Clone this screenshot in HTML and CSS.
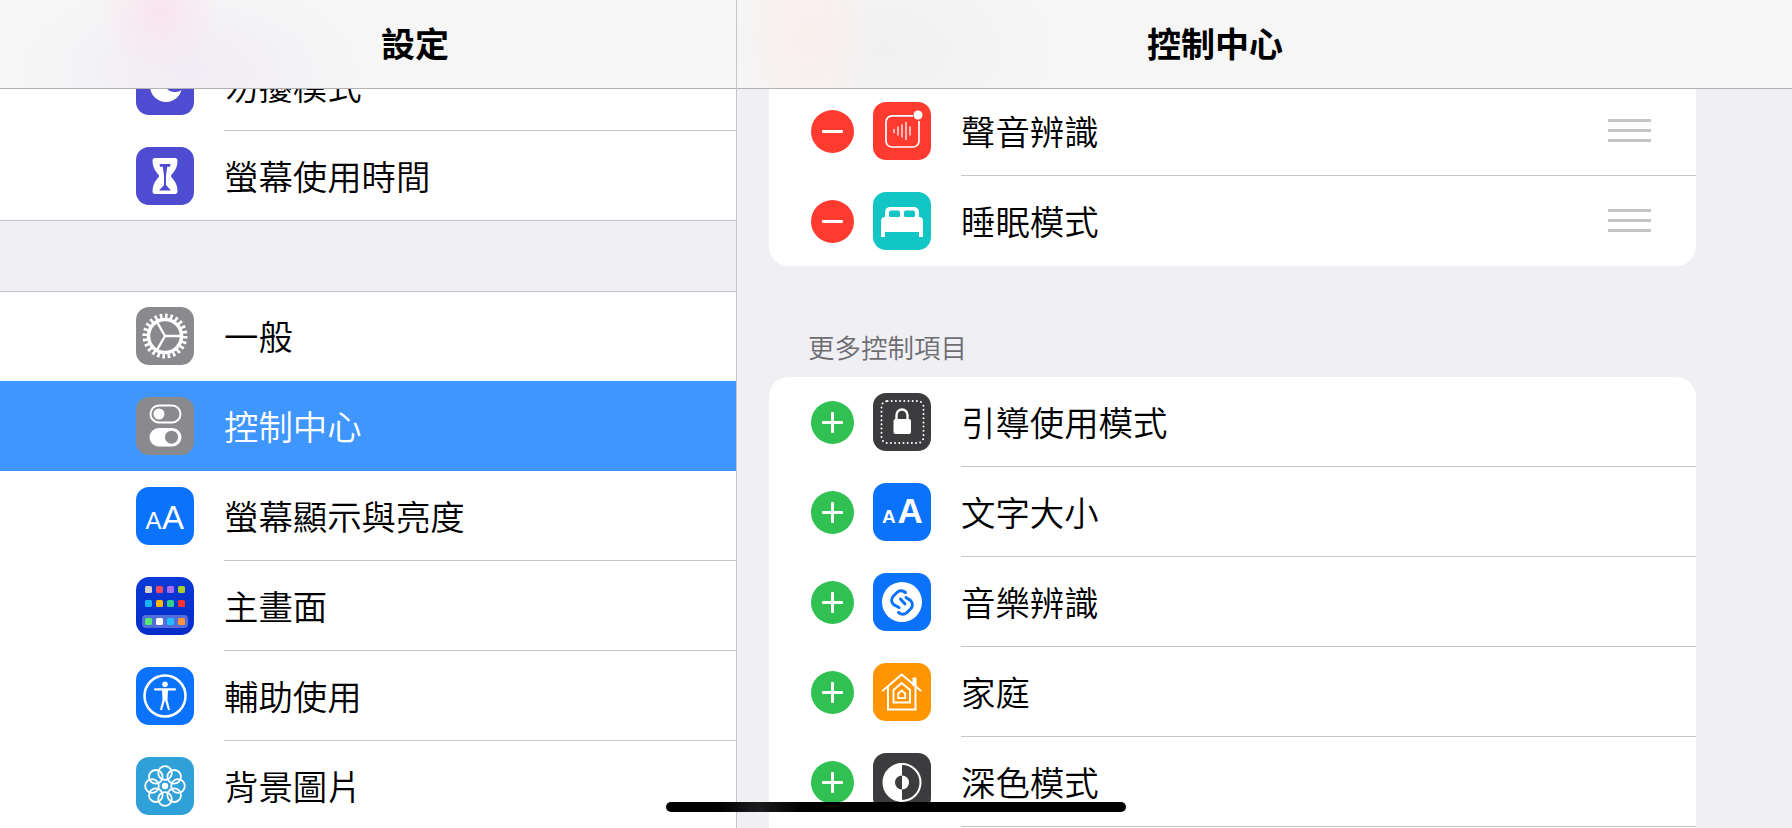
FILE: index.html
```html
<!DOCTYPE html>
<html lang="zh-Hant">
<head>
<meta charset="utf-8">
<title>控制中心</title>
<link rel="stylesheet" href="styles.css">
</head>
<body>
<div class="app">
  <aside class="master">
    <header class="nav nav-master"><h1 class="nav-title">設定</h1></header>
    <div class="master-list">
      <section class="group">
        <div class="row">
          <svg class="icon" viewBox="0 0 58 58"><rect width="58" height="58" rx="13" fill="#4f4cd2"/><circle cx="30" cy="29" r="16" fill="#fff"/><circle cx="39" cy="23" r="12" fill="#4f4cd2"/></svg>
          <div class="label sep">勿擾模式</div>
        </div>
        <div class="row">
          <svg class="icon" viewBox="0 0 58 58"><rect width="58" height="58" rx="13" fill="#4f4cd2"/><path d="M19 11h20c1.500 0 2.500 1 2.500 2.500 0 5-1.500 9-4.500 12.500-1.500 1.500-2 2.300-2 3s.5 1.500 2 3c3 3.500 4.500 7.500 4.500 12.500 0 1.500-1 2.500-2.500 2.500H19c-1.500 0-2.500-1-2.500-2.500 0-5 1.500-9 4.500-12.500 1.500-1.500 2-2.300 2-3s-.5-1.500-2-3c-3-3.500-4.500-7.500-4.500-12.500 0-1.500 1-2.500 2.500-2.500z" fill="#fff"/><path d="M23.500 17H34.500L34 19.800H31.200L30 29V38L35 43.500H23L28 38V29L26.800 19.800H24z" fill="#4f4cd2"/></svg>
          <div class="label">螢幕使用時間</div>
        </div>
      </section>
      <section class="group group-gap">
        <div class="row">
          <svg class="icon" viewBox="0 0 58 58"><rect width="58" height="58" rx="13" fill="#8a8a8e"/><circle cx="29" cy="29" r="20" fill="none" stroke="#fff" stroke-width="5" pathLength="48" stroke-dasharray="1 1"/><circle cx="29" cy="29" r="16.500" fill="none" stroke="#fff" stroke-width="3.500"/><path d="M29 29H45M29 29L21 15M29 29L21 43" fill="none" stroke="#fff" stroke-width="2.400"/></svg>
          <div class="label">一般</div>
        </div>
        <div class="row row-selected">
          <svg class="icon" viewBox="0 0 58 58"><rect width="58" height="58" rx="13" fill="#8a8a8e"/><rect x="14.500" y="8.500" width="30" height="17" rx="8.500" fill="none" stroke="#fff" stroke-width="2"/><circle cx="23" cy="17" r="5.500" fill="#fff"/><rect x="13.500" y="31" width="32" height="18.500" rx="9.250" fill="#fff"/><circle cx="35.500" cy="40.200" r="6.500" fill="#8a8a8e"/></svg>
          <div class="label">控制中心</div>
        </div>
        <div class="row">
          <svg class="icon" viewBox="0 0 58 58"><rect width="58" height="58" rx="13" fill="#0a72fb"/><text class="aa-thin" x="9.500" y="41.500" font-size="24">A</text><text class="aa-thin" x="26" y="41.500" font-size="33">A</text></svg>
          <div class="label sep">螢幕顯示與亮度</div>
        </div>
        <div class="row">
          <svg class="icon" viewBox="0 0 58 58"><defs><linearGradient id="homeBg" x1="0" y1="0" x2="0" y2="1"><stop offset="0" stop-color="#0a3ad6"/><stop offset="1" stop-color="#052cc8"/></linearGradient></defs><rect width="58" height="58" rx="13" fill="url(#homeBg)"/><rect x="9" y="9" width="7" height="7" rx="1.500" fill="#d5cfc8"/><rect x="20" y="9" width="7" height="7" rx="1.500" fill="#f4485e"/><rect x="31" y="9" width="7" height="7" rx="1.500" fill="#a96cf0"/><rect x="42" y="9" width="7" height="7" rx="1.500" fill="#a8ce2c"/><rect x="9" y="23" width="7" height="7" rx="1.500" fill="#1bb4f8"/><rect x="20" y="23" width="7" height="7" rx="1.500" fill="#ffb800"/><rect x="31" y="23" width="7" height="7" rx="1.500" fill="#2ecf90"/><rect x="42" y="23" width="7" height="7" rx="1.500" fill="#ff3030"/><rect x="6" y="38" width="46" height="13" rx="4" fill="#fff" fill-opacity=".3"/><rect x="9" y="41" width="7" height="7" rx="1.500" fill="#55e86a"/><rect x="20" y="41" width="7" height="7" rx="1.500" fill="#fff"/><rect x="31" y="41" width="7" height="7" rx="1.500" fill="#1cc0ff"/><rect x="42" y="41" width="7" height="7" rx="1.500" fill="#ff9438"/></svg>
          <div class="label sep">主畫面</div>
        </div>
        <div class="row">
          <svg class="icon" viewBox="0 0 58 58"><rect width="58" height="58" rx="13" fill="#0a72fb"/><circle cx="29" cy="29" r="20.500" fill="none" stroke="#fff" stroke-width="2.500"/><circle cx="29" cy="17.300" r="2.800" fill="#fff"/><path d="M19 22.300H39" fill="none" stroke="#fff" stroke-width="2.200" stroke-linecap="round"/><path d="M26 22.500h6l-.5 10.500L34 42.700l-2 .5L29.300 34h-.6L26 43.200l-2-.5L26.500 33z" fill="#fff"/></svg>
          <div class="label sep">輔助使用</div>
        </div>
        <div class="row">
          <svg class="icon" viewBox="0 0 58 58"><rect width="58" height="58" rx="13" fill="#2fa0d8"/><g fill="none" stroke="#fff" stroke-width="1.800"><circle cx="29" cy="16" r="6.800"/><circle cx="38.200" cy="19.800" r="6.800"/><circle cx="42" cy="29" r="6.800"/><circle cx="38.200" cy="38.200" r="6.800"/><circle cx="29" cy="42" r="6.800"/><circle cx="19.800" cy="38.200" r="6.800"/><circle cx="16" cy="29" r="6.800"/><circle cx="19.800" cy="19.800" r="6.800"/></g><circle cx="29" cy="29" r="3.200" fill="#fff"/></svg>
          <div class="label">背景圖片</div>
        </div>
      </section>
    </div>
  </aside>

  <main class="detail">
    <header class="nav nav-detail"><h1 class="nav-title">控制中心</h1></header>
    <div class="detail-scroll">
      <section class="card">
        <div class="ctl-row">
          <span class="badge badge-remove"><span class="badge-h"></span></span>
          <svg class="icon" viewBox="0 0 58 58"><rect width="58" height="58" rx="13" fill="#ff3b30"/><path d="M40 13.800H19a6 6 0 0 0-6 6V39a6 6 0 0 0 6 6h21a6 6 0 0 0 6-6V19" fill="none" stroke="#fff" stroke-width="1.700"/><circle cx="45" cy="13" r="4.500" fill="#fff"/><path d="M21 27.500v3M25 25v8M29 23v12M33 20.500v17M37 25v8" fill="none" stroke="#fff" stroke-width="1.300" stroke-linecap="round"/></svg>
          <div class="label sep">聲音辨識<span class="handle"><i></i><i></i><i></i></span></div>
        </div>
        <div class="ctl-row">
          <span class="badge badge-remove"><span class="badge-h"></span></span>
          <svg class="icon" viewBox="0 0 58 58"><rect width="58" height="58" rx="13" fill="#13c6c6"/><path d="M12 27V20a5 5 0 0 1 5-5H41a5 5 0 0 1 5 5v7z" fill="#fff"/><rect x="16" y="18.500" width="11" height="7" rx="2" fill="#13c6c6"/><rect x="31" y="18.500" width="11" height="7" rx="2" fill="#13c6c6"/><path d="M8 40V29a4 4 0 0 1 4-4H46a4 4 0 0 1 4 4V45H46V40H12v5H8z" fill="#fff"/></svg>
          <div class="label">睡眠模式<span class="handle"><i></i><i></i><i></i></span></div>
        </div>
      </section>
      <h2 class="section-head">更多控制項目</h2>
      <section class="card card-open">
        <div class="ctl-row">
          <span class="badge badge-add"><span class="badge-h"></span><span class="badge-v"></span></span>
          <svg class="icon" viewBox="0 0 58 58"><rect width="58" height="58" rx="13" fill="#3c3c3e"/><rect x="8.500" y="8" width="42" height="42" rx="6" fill="none" stroke="#fff" stroke-width="2" stroke-linecap="round" stroke-dasharray="0 4.200"/><path d="M23.500 27v-5a5.500 5.500 0 0 1 11 0v5" fill="none" stroke="#fff" stroke-width="2.400"/><rect x="20.500" y="26" width="17.500" height="15" rx="2" fill="#fff"/></svg>
          <div class="label sep">引導使用模式</div>
        </div>
        <div class="ctl-row">
          <span class="badge badge-add"><span class="badge-h"></span><span class="badge-v"></span></span>
          <svg class="icon" viewBox="0 0 58 58"><rect width="58" height="58" rx="13" fill="#0a72fb"/><text class="aa-bold" x="9" y="40" font-size="19">A</text><text class="aa-bold" x="24.500" y="40" font-size="35">A</text></svg>
          <div class="label sep">文字大小</div>
        </div>
        <div class="ctl-row">
          <span class="badge badge-add"><span class="badge-h"></span><span class="badge-v"></span></span>
          <svg class="icon" viewBox="0 0 58 58"><rect width="58" height="58" rx="13" fill="#0a72fb"/><circle cx="29" cy="29" r="20" fill="#fff"/><path d="M32.500 19.500C29.500 17 26 17.500 24 19.500L20.500 23C18 25.500 18 29 20.500 31.500L26 34.500M25.500 39.500C28.500 42 32 41.500 34 39.500L37.500 36C40 33.500 40 30 37.500 27.500L33 24.500M27.500 26L32 31" fill="none" stroke="#0a72fb" stroke-width="3" stroke-linecap="round"/></svg>
          <div class="label sep">音樂辨識</div>
        </div>
        <div class="ctl-row">
          <span class="badge badge-add"><span class="badge-h"></span><span class="badge-v"></span></span>
          <svg class="icon" viewBox="0 0 58 58"><rect width="58" height="58" rx="13" fill="#ff9500"/><path d="M39.500 14.500h4V23h-4z" fill="#fff"/><path d="M10 27.500L28.700 11.500 47.500 27.500" fill="none" stroke="#fff" stroke-width="2" stroke-linecap="round" stroke-linejoin="round"/><path d="M15 24V46.500H42.500V24" fill="none" stroke="#fff" stroke-width="2"/><path d="M20.500 27L28.700 20 37 27V39.500H20.500z" fill="none" stroke="#fff" stroke-width="2"/><path d="M25.200 30.500L28.700 27.500 32.200 30.500V35.200H25.200z" fill="none" stroke="#fff" stroke-width="1.800"/></svg>
          <div class="label sep">家庭</div>
        </div>
        <div class="ctl-row">
          <span class="badge badge-add"><span class="badge-h"></span><span class="badge-v"></span></span>
          <svg class="icon" viewBox="0 0 58 58"><rect width="58" height="58" rx="13" fill="#3c3c3e"/><circle cx="29" cy="29.500" r="18.500" fill="none" stroke="#fff" stroke-width="2"/><path d="M29 10.500a19 19 0 0 0 0 38z" fill="#fff"/><path d="M29 22.500a7 7 0 0 0 0 14z" fill="#3c3c3e"/><path d="M29 22.500a7 7 0 0 1 0 14z" fill="#fff"/></svg>
          <div class="label sep">深色模式</div>
        </div>
      </section>
    </div>
  </main>
  <div class="home-indicator"></div>
</div>
</body>
</html>
```

FILE: styles.css
```css
* { box-sizing: border-box; }

html, body {
  margin: 0;
  height: 100%;
  overflow: hidden;
  background: #efeff4;
}

.app {
  position: relative;
  display: flex;
  width: 1792px;
  height: 828px;
  overflow: hidden;
  font-family: "Noto Sans CJK TC", "Noto Sans", sans-serif;
  font-size: 34.4px;
  color: #000;
}

.master {
  position: relative;
  flex: 0 0 737px;
  height: 100%;
  overflow: hidden;
  border-right: 1px solid #c6c6c8;
  background: #efeff4;
}

.detail {
  position: relative;
  flex: 1;
  height: 100%;
  overflow: hidden;
}

.nav {
  position: absolute;
  top: 0;
  left: 0;
  right: 0;
  z-index: 2;
  height: 89px;
  display: flex;
  align-items: center;
  justify-content: center;
  border-bottom: 1px solid #b2b2b2;
}

.nav-master {
  padding-left: 94px;
  background:
    radial-gradient(ellipse 60px 65px at 160px 10px, rgba(250, 226, 236, .9), rgba(250, 226, 236, 0)),
    radial-gradient(ellipse 170px 90px at 190px 70px, rgba(238, 233, 243, .75), rgba(238, 233, 243, 0)),
    #f6f6f6;
}

.nav-detail {
  padding-right: 99px;
  background:
    radial-gradient(ellipse 70px 130px at 70px 30px, rgba(252, 238, 236, .85), rgba(252, 238, 236, 0)),
    radial-gradient(ellipse 170px 110px at 150px 50px, rgba(240, 240, 241, .9), rgba(240, 240, 241, 0)),
    #f6f6f6;
}

.nav-title {
  margin: 0;
  font-size: 34px;
  font-weight: 700;
  line-height: 1;
  position: relative;
  top: -1px;
}

.master-list {
  padding-top: 41px;
}

.group {
  background: #fff;
}

.group-gap {
  margin-top: 70px;
  box-shadow: inset 0 1px 0 #c6c6c8;
}

.group:first-child {
  box-shadow: inset 0 -1px 0 #c6c6c8;
}

.row {
  display: flex;
  align-items: center;
  height: 90px;
  padding-left: 136px;
}

.row .label {
  margin-left: 30px;
}

.row-selected {
  background: #4096ff;
  color: #fff;
}

.icon {
  flex: 0 0 58px;
  width: 58px;
  height: 58px;
  display: block;
}

.label {
  flex: 1;
  height: 100%;
  padding-bottom: 2px;
  display: flex;
  align-items: center;
  justify-content: space-between;
  font-weight: 350;
  line-height: 1;
}

.sep {
  box-shadow: inset 0 -1px 0 #c6c6c8;
}

.detail-scroll {
  padding: 86px 96px 0 32px;
}

.card {
  background: #fff;
  border-radius: 20px;
  overflow: hidden;
}

.card:first-child {
  border-radius: 0 0 20px 20px;
}

.card-open {
  padding-bottom: 40px;
}

.section-head {
  margin: 0;
  padding: 68px 0 16px 39px;
  height: 111px;
  font-size: 26.500px;
  font-weight: 350;
  line-height: 1;
  color: #6d6d72;
}

.ctl-row {
  display: flex;
  align-items: center;
  height: 90px;
  padding-left: 42px;
}

.ctl-row .icon {
  margin-left: 19px;
}

.ctl-row .label {
  margin-left: 30px;
}

.badge {
  flex: 0 0 43px;
  position: relative;
  width: 43px;
  height: 43px;
  border-radius: 50%;
  display: flex;
  align-items: center;
  justify-content: center;
}

.badge-remove { background: #ff3b30; }
.badge-add { background: #30c152; }

.badge-h, .badge-v {
  position: absolute;
  background: #fff;
  border-radius: 1px;
}

.badge-h { width: 21px; height: 3px; }
.badge-v { width: 3px; height: 21px; }

.handle {
  display: flex;
  flex-direction: column;
  gap: 7px;
  width: 43px;
  margin-right: 45px;
}

.handle i {
  display: block;
  height: 3px;
  background: #c4c4c6;
}

.aa-thin {
  font-family: "Liberation Sans", sans-serif;
  fill: #fff;
  font-weight: 400;
}

.aa-bold {
  font-family: "Liberation Sans", sans-serif;
  fill: #fff;
  font-weight: 700;
}

.home-indicator {
  position: absolute;
  left: 666px;
  top: 802px;
  z-index: 3;
  width: 460px;
  height: 10px;
  border-radius: 5px;
  background: linear-gradient(90deg, #000 0, #000 11%, #1c1c1c 20%, #000 30%, #000 100%);
}
```
